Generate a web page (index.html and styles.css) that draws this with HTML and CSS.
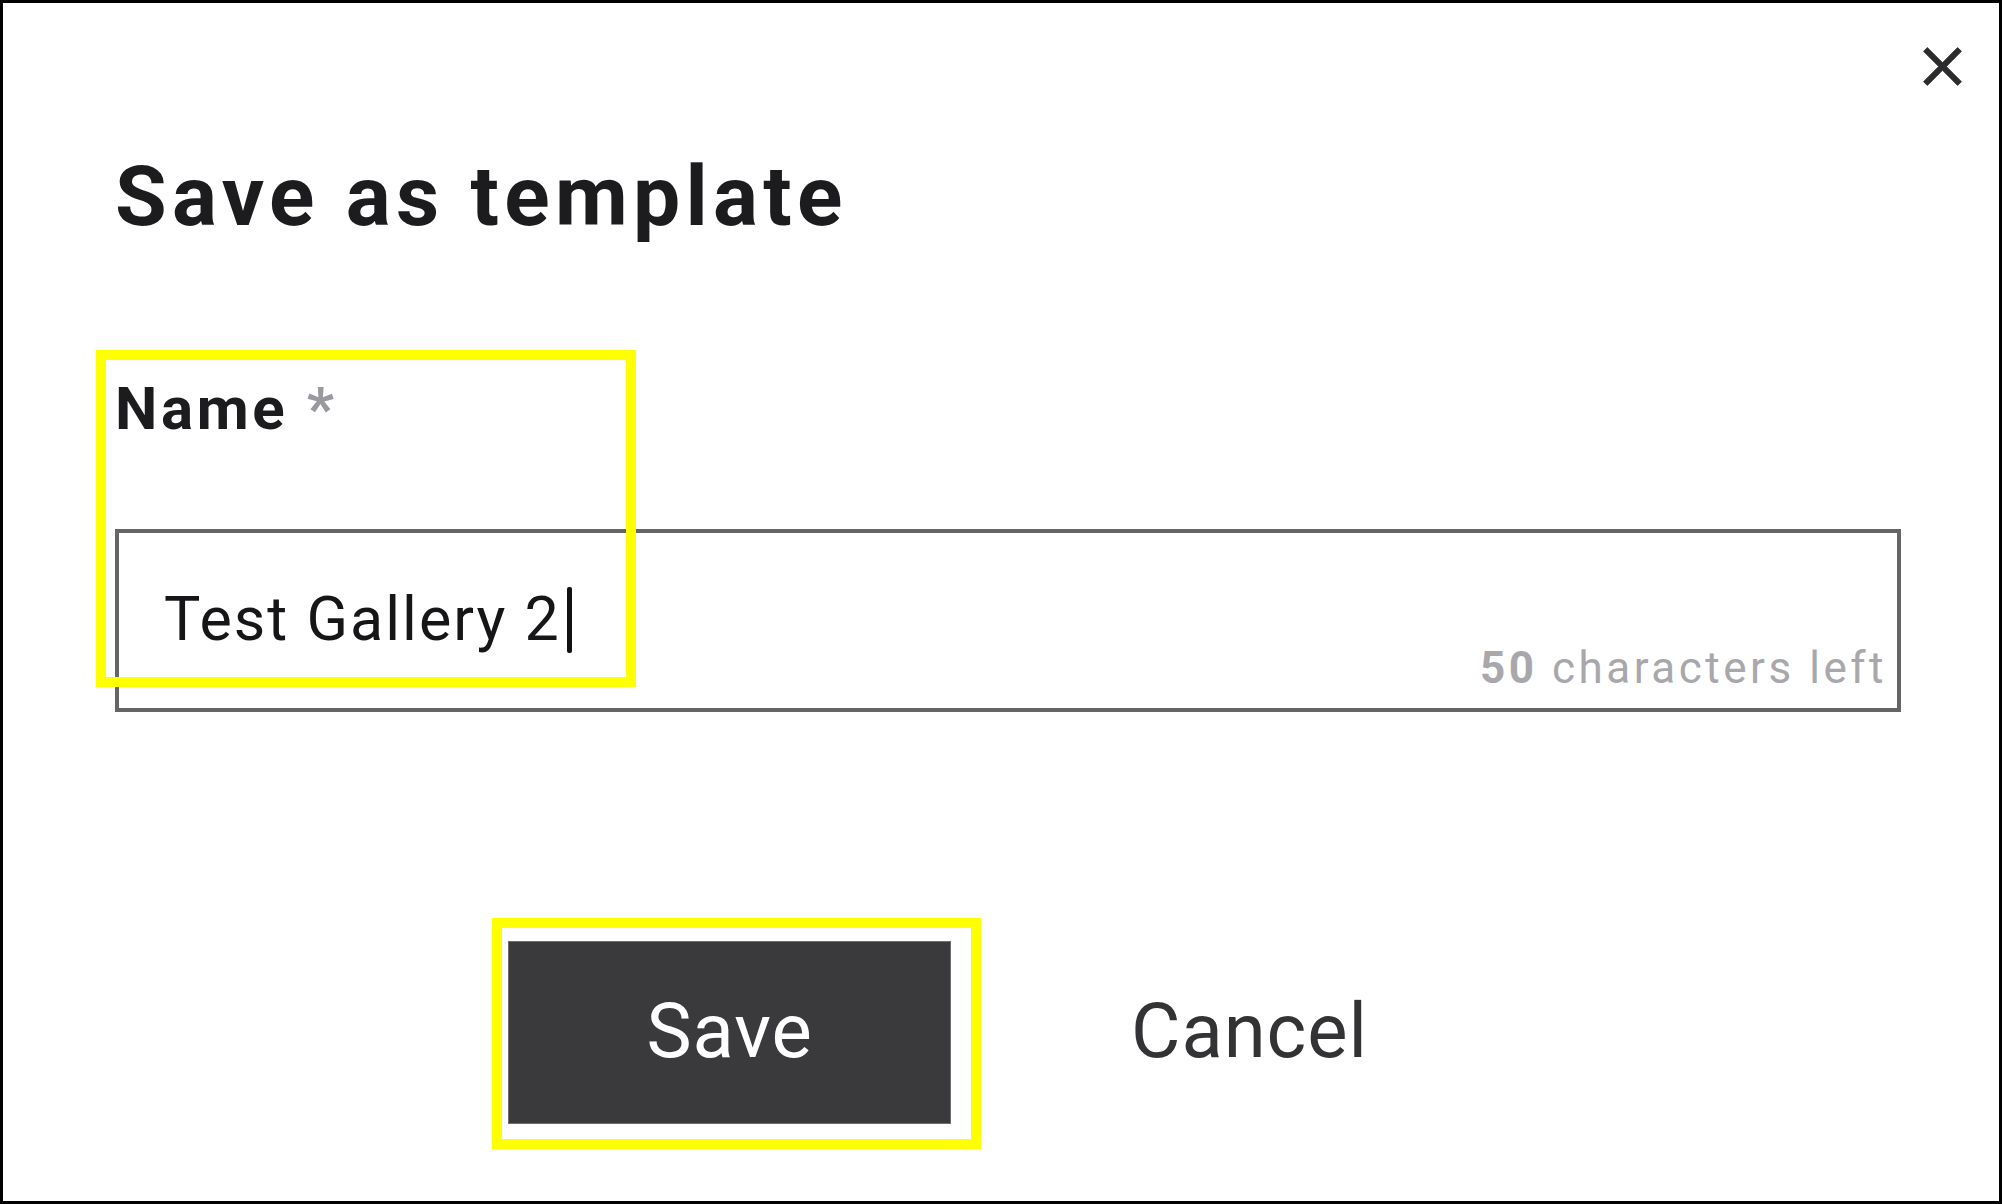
FILE: index.html
```html
<!DOCTYPE html>
<html lang="en">
<head>
<meta charset="utf-8">
<title>Save as template</title>
<link rel="stylesheet" href="styles.css">
</head>
<body>
<div class="dialog">
  <div class="topbar">
    <button class="close" aria-label="Close">
      <svg viewBox="0 0 24 24"><path d="M19 6.41L17.59 5 12 10.59 6.41 5 5 6.41 10.59 12 5 17.59 6.41 19 12 13.41 17.59 19 19 17.59 13.41 12z"/></svg>
    </button>
  </div>
  <h1 class="title">Save as template</h1>
  <div class="field">
    <label class="label">Name <span class="req">*</span></label>
    <div class="input">
      <div class="value">Test Gallery 2<span class="caret"></span></div>
      <div class="counter"><span class="count">50</span> characters left</div>
    </div>
  </div>
  <div class="actions">
    <button class="btn btn-save">Save</button>
    <button class="btn btn-cancel">Cancel</button>
  </div>
  <div class="highlight highlight-name"></div>
  <div class="highlight highlight-save"></div>
</div>
</body>
</html>
```
FILE: styles.css
```css
* { box-sizing: border-box; }
html, body { margin: 0; padding: 0; }
body {
  background: #fff;
  font-family: Roboto, "Liberation Sans", sans-serif;
  width: 2002px;
  height: 1204px;
  overflow: hidden;
}
.dialog {
  position: relative;
  width: 2002px;
  height: 1204px;
  border: 3px solid #000;
  padding: 31px 98px 0 112px;
  display: flex;
  flex-direction: column;
}
.topbar {
  display: flex;
  justify-content: flex-end;
  margin-right: -74px;
  height: 65px;
}
.close {
  width: 65px;
  height: 65px;
  padding: 0;
  border: 0;
  background: none;
  display: block;
}
.close svg {
  width: 65px;
  height: 65px;
  display: block;
  fill: #2c2c2e;
  stroke: #2c2c2e;
  stroke-width: 0.3;
  stroke-linejoin: round;
}
.title {
  margin: 56px 0 0;
  font-size: 84px;
  line-height: 84px;
  font-weight: 700;
  letter-spacing: 0.063em;
  color: #1c1c1e;
}
.label {
  display: block;
  margin-top: 140px;
  font-size: 60px;
  line-height: 60px;
  font-weight: 700;
  letter-spacing: 0.06em;
  color: #1c1c1e;
}
.req { color: #9a9a9e; }
.input {
  margin-top: 90px;
  border: 4px solid #656567;
  padding: 58px 10px 20px 45px;
}
.value {
  font-size: 61px;
  line-height: 56px;
  letter-spacing: 0.033em;
  color: #161618;
  white-space: nowrap;
}
.caret {
  display: inline-block;
  width: 5px;
  height: 66px;
  margin: -8px 0 -8px 6px;
  vertical-align: -5px;
  background: #111;
  border-radius: 2px;
}
.counter {
  margin-top: 1px;
  text-align: right;
  font-size: 44px;
  line-height: 40px;
  letter-spacing: 0.08em;
  color: #a8a8ac;
}
.count { font-weight: 700; }
.actions {
  margin-top: 229px;
  padding-left: 393px;
  display: flex;
  gap: 77px;
}
.btn {
  width: 443px;
  height: 183px;
  font-family: Roboto, "Liberation Sans", sans-serif;
  font-size: 76px;
  line-height: 76px;
  letter-spacing: 0.012em;
  padding: 0 0 4px;
  display: flex;
  align-items: center;
  justify-content: center;
}
.btn-save {
  background: #3a3a3c;
  color: #fff;
  border: 1px solid #6e6e70;
}
.btn-cancel {
  background: transparent;
  color: #333336;
  border: 0;
}
.highlight {
  position: absolute;
  border: 10px solid #ffff00;
  pointer-events: none;
}
.highlight-name { left: 93px; top: 347px; width: 540px; height: 337px; }
.highlight-save { left: 489px; top: 915px; width: 489px; height: 231px; }
```
